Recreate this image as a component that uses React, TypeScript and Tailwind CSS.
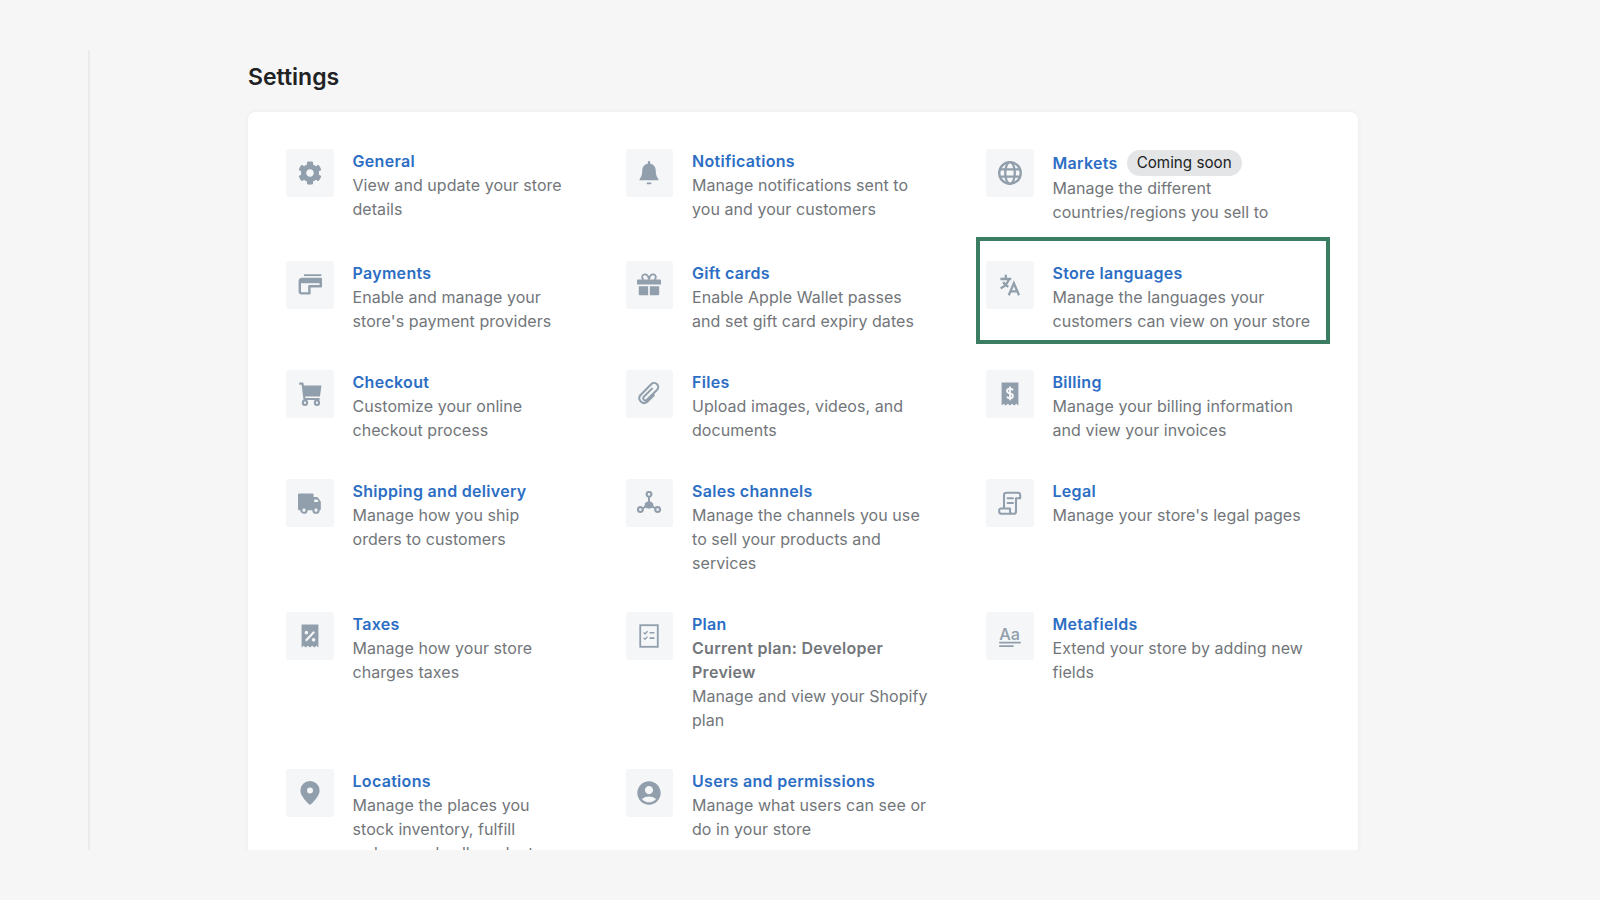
import { ReactNode } from "react";
import { FaCog } from "react-icons/fa";
import { MdAccountCircle } from "react-icons/md";

const ink = "#919eab";
const tile = "#f4f6f8";

function Svg({ children }: { children: ReactNode }) {
    return (
        <svg viewBox="0 0 20 20" className="w-6 h-6" fill={ink}>
            {children}
        </svg>
    );
}

const Bell = () => (
    <Svg>
        <path d="M10 0a1 1 0 0 1 1 1v1.2c2.8.5 4.6 2.8 4.6 5.6 0 3.6.8 5.6 2 6.9.4.4.4 1.3-.3 1.3H2.7c-.7 0-.7-.9-.3-1.3 1.2-1.3 2-3.3 2-6.9 0-2.8 1.8-5.100 4.6-5.600V1a1 1 0 0 1 1-1z" />
        <path d="M8.5 18h3a.7.7 0 0 1 0 1.300h-3a.7.7 0 0 1 0-1.300z" />
    </Svg>
);

const Globe = () => (
    <Svg>
        <g fill="none" stroke={ink} strokeWidth="1.9">
            <circle cx="10" cy="10" r="9" />
            <ellipse cx="10" cy="10" rx="4" ry="9" />
            <path d="M1.500 7h17M1.500 13h17" />
        </g>
    </Svg>
);

const Payments = () => (
    <Svg>
        <g fill="none" stroke={ink}>
            <path d="M5 1.800h14.500" strokeWidth="1.500" />
            <path d="M19 5H3.500a2 2 0 0 0-2 2v8.500c0 .8.6 1.500 1.500 1.500h6.500v-6H19z" strokeWidth="2" strokeLinejoin="round" />
        </g>
        <path d="M2 5h17v3.500H2z" />
    </Svg>
);

const Gift = () => (
    <Svg>
        <path d="M1 5.500h18a1 1 0 0 1 1 1v3H0v-3a1 1 0 0 1 1-1z" />
        <path d="M1.500 11h7.800v7.500H2.500a1 1 0 0 1-1-1zM10.700 11h7.800v6.500a1 1 0 0 1-1 1h-6.800z" />
        <path d="M10 5.500C9.500 2.500 8 1 6.200 1.200 4 1.500 3.600 4.500 5.500 5.500M10 5.500c.5-3 2-4.500 3.800-4.300 2.200.3 2.600 3.300.7 4.300" fill="none" stroke={ink} strokeWidth="1.500" />
    </Svg>
);

const Languages = () => (
    <Svg>
        <g fill="none" stroke={ink} strokeWidth="1.900">
            <path d="M2 5h9M6.500 1.500V5M9 5c-.6 3-3 6-6.800 7.800M4.300 7.500c.8 1.800 2.400 3.200 4.400 4" />
            <path d="M9 18.500l4.200-10 4.300 10M10.300 15.300h5.900" />
        </g>
    </Svg>
);

const Cart = () => (
    <Svg>
        <path d="M1 .5h2.700a1 1 0 0 1 1 .9L4.900 3H19.500l-1.200 9H5.900l.2 1.300H18V15H4.600L3 2.200H1z" />
        <circle cx="5.800" cy="17.300" r="1.800" fill="none" stroke={ink} strokeWidth="1.700" />
        <circle cx="15.800" cy="17.300" r="1.800" fill="none" stroke={ink} strokeWidth="1.700" />
    </Svg>
);

const Paperclip = () => (
    <Svg>
        <path d="M12.500 5.500l-7 7a1.800 1.800 0 0 0 2.500 2.500l8.800-8.500a3.400 3.400 0 0 0-4.800-4.800L2.800 11a4 4 0 0 0 5.600 5.600l5.600-5.600" fill="none" stroke={ink} strokeWidth="1.700" strokeLinecap="round" />
    </Svg>
);

const Receipt = ({ children }: { children: ReactNode }) => (
    <Svg>
        <path d="M3 .5h14v19l-1.700-1.300-1.700 1.300-1.800-1.300L10 19.500l-1.800-1.300-1.800 1.300-1.700-1.300L3 19.500z" />
        {children}
    </Svg>
);

const Dollar = () => (
    <Receipt>
        <path d="M12.500 7c-.4-.9-1.400-1.400-2.500-1.400-1.400 0-2.500.7-2.500 2 0 2.600 5 1.300 5 3.900 0 1.300-1.100 2-2.500 2-1.100 0-2.100-.5-2.500-1.400M10 3.800v11.400" fill="none" stroke={tile} strokeWidth="1.600" />
    </Receipt>
);

const Percent = () => (
    <Receipt>
        <path d="M6.500 14l7-7.500" fill="none" stroke={tile} strokeWidth="1.800" />
        <circle cx="7" cy="7.200" r="1.500" fill={tile} />
        <circle cx="13" cy="13.200" r="1.500" fill={tile} />
    </Receipt>
);

const Truck = () => (
    <Svg>
        <path d="M1 2h11a1 1 0 0 1 1 1v2h2.800a1 1 0 0 1 .8.4l2.200 3.100a1 1 0 0 1 .2.6V15a1 1 0 0 1-1 1H1a1 1 0 0 1-1-1V3a1 1 0 0 1 1-1z" />
        <path d="M13.500 7h2.500l1.300 2.200h-3.800z" fill={tile} />
        <circle cx="5" cy="16" r="2.200" fill={tile} stroke={ink} strokeWidth="1.700" />
        <circle cx="15" cy="16" r="2.200" fill={tile} stroke={ink} strokeWidth="1.700" />
    </Svg>
);

const Channels = () => (
    <Svg>
        <path d="M10 4v6M10 11l-6 4M10 11l6 4" stroke={ink} strokeWidth="1.600" fill="none" />
        <path d="M6.500 13.800a3.800 3.800 0 1 1 7 0L10 14.800z" />
        <g fill={tile} stroke={ink} strokeWidth="1.800">
            <circle cx="10" cy="2.800" r="2" />
            <circle cx="2.800" cy="15.500" r="2" />
            <circle cx="17.200" cy="15.500" r="2" />
        </g>
    </Svg>
);

const Legal = () => (
    <Svg>
        <g fill="none" stroke={ink} strokeWidth="1.700" strokeLinejoin="round" strokeLinecap="round">
            <path d="M5 14.500v-11a2 2 0 0 1 2-2h9.500a2 2 0 0 1 2 2V6H15v11a2 2 0 0 1-2 2H3a2 2 0 0 1-2-2v-1a1.500 1.500 0 0 1 1.500-1.500H10V17a2 2 0 0 0 2 2" />
            <path d="M8 6h4.500M8 10h4.500" />
        </g>
    </Svg>
);

const Plan = () => (
    <Svg>
        <rect x="2.700" y="1" width="14.600" height="18" fill="none" stroke={ink} strokeWidth="1.500" />
        <g fill="none" stroke={ink} strokeWidth="1.100">
            <path d="M5.500 7l1.200 1.300L8.800 6M5.500 11.500l1.200 1.300 2.100-2.300" />
            <path d="M10.500 7.300h4M10.500 11.800h4" strokeWidth="1.400" />
        </g>
    </Svg>
);

const Metafields = () => (
    <Svg>
        <text x="1" y="13" fontFamily="Inter, sans-serif" fontSize="13.500" fontWeight="500" fill={ink}>
            Aa
        </text>
        <path d="M1 15.500h18M1 18.500h12" stroke={ink} strokeWidth="1.500" />
    </Svg>
);

const Pin = () => (
    <Svg>
        <path fillRule="evenodd" d="M10 0a8 8 0 0 0-8 8c0 4.800 6 10.500 8 12 2-1.500 8-7.200 8-12a8 8 0 0 0-8-8zm0 5.500a2.500 2.500 0 1 1 0 5 2.500 2.500 0 0 1 0-5z" />
    </Svg>
);

type Item = {
    title: string;
    desc: ReactNode;
    icon: ReactNode;
    pad: string;
    badge?: boolean;
    highlight?: boolean;
};

const items: Item[] = [
    { title: "General", desc: "View and update your store details", icon: <FaCog className="w-6 h-6" color={ink} />, pad: "pr-[60px]" },
    { title: "Notifications", desc: "Manage notifications sent to you and your customers", icon: <Bell />, pad: "pr-[54px]" },
    { title: "Markets", desc: "Manage the different countries/regions you sell to", icon: <Globe />, pad: "pr-0", badge: true },
    { title: "Payments", desc: "Enable and manage your store's payment providers", icon: <Payments />, pad: "pr-[60px]" },
    { title: "Gift cards", desc: "Enable Apple Wallet passes and set gift card expiry dates", icon: <Gift />, pad: "pr-[54px]" },
    { title: "Store languages", desc: "Manage the languages your customers can view on your store", icon: <Languages />, pad: "pr-0", highlight: true },
    { title: "Checkout", desc: "Customize your online checkout process", icon: <Cart />, pad: "pr-[60px]" },
    { title: "Files", desc: "Upload images, videos, and documents", icon: <Paperclip />, pad: "pr-[54px]" },
    { title: "Billing", desc: "Manage your billing information and view your invoices", icon: <Dollar />, pad: "pr-0" },
    { title: "Shipping and delivery", desc: "Manage how you ship orders to customers", icon: <Truck />, pad: "pr-[60px]" },
    { title: "Sales channels", desc: "Manage the channels you use to sell your products and services", icon: <Channels />, pad: "pr-[54px]" },
    { title: "Legal", desc: "Manage your store's legal pages", icon: <Legal />, pad: "pr-0" },
    { title: "Taxes", desc: "Manage how your store charges taxes", icon: <Percent />, pad: "pr-[60px]" },
    {
        title: "Plan",
        desc: (
            <>
                <span className="font-semibold tracking-[0.3px]">Current plan: Developer Preview</span>
                <br />
                Manage and view your Shopify plan
            </>
        ),
        icon: <Plan />,
        pad: "pr-[54px]",
    },
    { title: "Metafields", desc: "Extend your store by adding new fields", icon: <Metafields />, pad: "pr-0" },
    { title: "Locations", desc: "Manage the places you stock inventory, fulfill orders, and sell products", icon: <Pin />, pad: "pr-[60px]" },
    { title: "Users and permissions", desc: "Manage what users can see or do in your store", icon: <MdAccountCircle className="w-7 h-7" color={ink} />, pad: "pr-[54px]" },
];

function SettingItem({ item }: { item: Item }) {
    return (
        <div className={`relative flex gap-[19px] ${item.pad}`}>
            {item.highlight && (
                <div className="absolute -left-[10px] -top-[24px] w-[354px] h-[107px] border-4 border-[#3a7d63] pointer-events-none" />
            )}
            <div className="flex items-center justify-center shrink-0 w-[47.5px] h-[47.5px] rounded-[3px] bg-[#f4f6f8]">
                {item.icon}
            </div>
            <div className="flex-1 min-w-0 text-base leading-6 tracking-[0.06px] text-[#72767a]">
                {item.badge ? (
                    <div className="flex items-center h-[27px] gap-[9px]">
                        <span className="font-semibold tracking-[0.3px] text-[#2c6ec4]">{item.title}</span>
                        <span className="rounded-full h-[26px] leading-[26px] px-[10px] bg-[#e4e5e7] text-[15.2px] tracking-normal text-[#202223]">
                            Coming soon
                        </span>
                    </div>
                ) : (
                    <div className="font-semibold tracking-[0.3px] text-[#2c6ec4]">{item.title}</div>
                )}
                <div>{item.desc}</div>
            </div>
        </div>
    );
}

export default function App() {
    return (
        <div className="h-[900px] py-[50px] pl-[88px] bg-[#f6f6f7] font-['Inter',sans-serif]">
            <div className="h-full overflow-hidden border-l-2 border-[#ebebed] pl-[158px] pr-[242px]">
                <h1 className="h-[62px] pt-[11px] text-[23px] leading-8 font-semibold text-[#202223]">
                    Settings
                </h1>
                <div className="rounded-lg bg-white p-[38px] pt-[37px] shadow-[0_0_5px_rgba(23,24,24,0.05)]">
                    <div className="grid grid-cols-[339.5px_360.5px_1fr] gap-y-[37px]">
                        {items.map((item) => (
                            <SettingItem key={item.title} item={item} />
                        ))}
                    </div>
                </div>
            </div>
        </div>
    );
}
